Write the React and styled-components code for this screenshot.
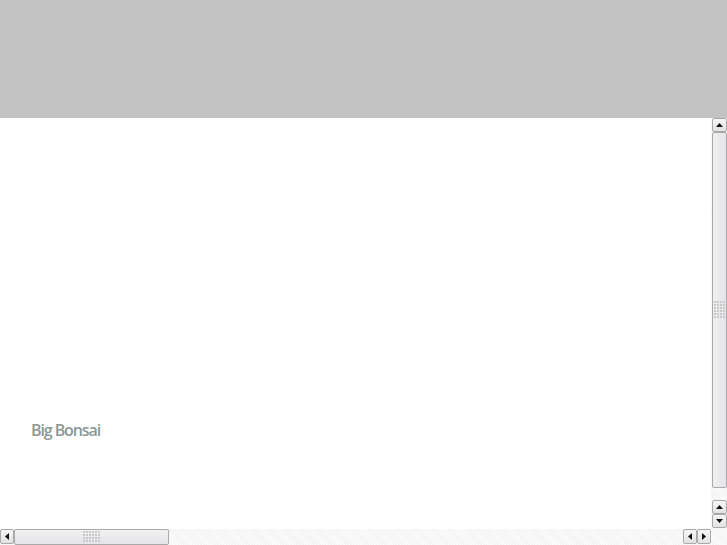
import React from "react";
import styled, { createGlobalStyle } from "styled-components";

const Global = createGlobalStyle`
  html, body { margin: 0; padding: 0; width: 727px; height: 545px; overflow: hidden; background: #fff; }
  #root { width: 727px; height: 545px; }
`;

const Page = styled.div`
  width: 727px;
  height: 545px;
  display: flex;
  flex-direction: column;
  font-family: "Open Sans", sans-serif;
`;

const Header = styled.div`
  height: 118px;
  background: #c3c3c3;
  flex: none;
`;

const Body = styled.div`
  flex: 1;
  display: flex;
  min-height: 0;
`;

const Content = styled.div`
  flex: 1;
  padding: 301px 0 0 31px;
`;

const Brand = styled.div`
  font-size: 16px;
  font-weight: 600;
  letter-spacing: -1.1px;
  color: #8b9893;
`;

const VBar = styled.div`
  width: 16px;
  flex: none;
  display: flex;
  flex-direction: column;
  background: repeating-linear-gradient(45deg, #f4f4f4 0 1px, #fbfbfb 1px 2px);
`;

const HBar = styled.div`
  height: 16px;
  flex: none;
  display: flex;
  background: repeating-linear-gradient(45deg, #f4f4f4 0 1px, #fbfbfb 1px 2px);
`;

const Btn = styled.div`
  width: ${(p) => (p.$w ? p.$w : 15)}px;
  height: ${(p) => (p.$h ? p.$h : 15)}px;
  flex: none;
  box-sizing: border-box;
  border: 1px solid #a9a9a9;
  border-radius: 2px;
  background: linear-gradient(#f6f6f6, #e2e2e2);
  display: flex;
  align-items: center;
  justify-content: center;
`;

const VThumb = styled.div`
  flex: ${(p) => p.$size}px 0 0;
  box-sizing: border-box;
  border: 1px solid #a9a9a9;
  border-radius: 2px;
  background: linear-gradient(90deg, #f0f0f0, #e4e4ea);
  display: flex;
  align-items: center;
  justify-content: center;
  margin-left: 1px;
`;

const HThumb = styled.div`
  width: ${(p) => p.$size}px;
  flex: none;
  box-sizing: border-box;
  border: 1px solid #a9a9a9;
  border-radius: 2px;
  background: linear-gradient(#f2f2f2, #e4e4ea);
  display: flex;
  align-items: center;
  justify-content: center;
`;

const Spacer = styled.div`
  flex: 1;
`;

const Grip = ({ rows, cols }) => {
  const dots = [];
  for (let r = 0; r < rows; r++)
    for (let c = 0; c < cols; c++)
      dots.push(<rect key={r + "-" + c} x={c * 3} y={r * 3} width="2" height="2" fill="#c8c8c8" />);
  return (
    <svg width={cols * 3} height={rows * 3}>
      {dots}
    </svg>
  );
};

const Arrow = ({ dir }) => {
  const pts = {
    up: "0,4 7,4 3.5,0",
    down: "0,0 7,0 3.5,4",
    left: "4,0 4,7 0,3.5",
    right: "0,0 0,7 4,3.5",
  }[dir];
  const vertical = dir === "up" || dir === "down";
  return (
    <svg width={vertical ? 7 : 4} height={vertical ? 4 : 7}>
      <polygon points={pts} fill="#111" />
    </svg>
  );
};

export default function App() {
  return (
    <Page>
      <Global />
      <Header />
      <Body>
        <Content>
          <Brand>Big Bonsai</Brand>
        </Content>
        <VBar>
          <Btn $w={15} $h={14} style={{ marginLeft: 1 }}>
            <Arrow dir="up" />
          </Btn>
          <VThumb $size={356}>
            <Grip rows={6} cols={4} />
          </VThumb>
          <Spacer />
          <Btn $w={15} $h={14} style={{ marginLeft: 1 }}>
            <Arrow dir="up" />
          </Btn>
          <Btn $w={15} $h={14} style={{ marginLeft: 1, marginBottom: 1 }}>
            <Arrow dir="down" />
          </Btn>
        </VBar>
      </Body>
      <HBar>
        <Btn $w={14} $h={15}>
          <Arrow dir="left" />
        </Btn>
        <HThumb $size={155}>
          <Grip rows={4} cols={6} />
        </HThumb>
        <Spacer />
        <Btn $w={14} $h={15}>
          <Arrow dir="left" />
        </Btn>
        <Btn $w={14} $h={15} style={{ marginRight: 16 }}>
          <Arrow dir="right" />
        </Btn>
      </HBar>
    </Page>
  );
}
